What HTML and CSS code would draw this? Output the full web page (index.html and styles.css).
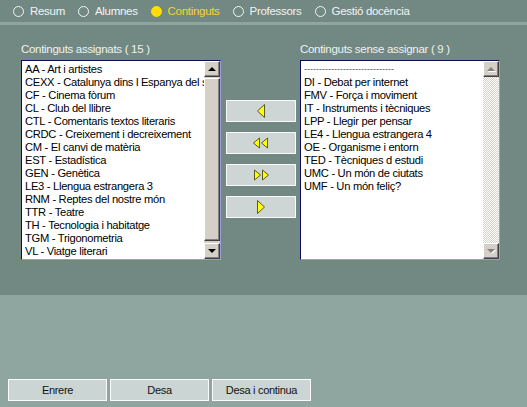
FILE: index.html
```html
<!DOCTYPE html>
<html>
<head>
<meta charset="utf-8">
<link rel="stylesheet" href="styles.css">
</head>
<body>
<div class="tabs">
  <div class="tab"><span class="radio"></span>Resum</div>
  <div class="tab"><span class="radio"></span>Alumnes</div>
  <div class="tab active"><span class="radio on"></span>Continguts</div>
  <div class="tab"><span class="radio"></span>Professors</div>
  <div class="tab"><span class="radio"></span>Gestió docència</div>
</div>
<div class="stripe"></div>
<div class="main">
  <div class="col">
    <div class="label">Continguts assignats ( 15 )</div>
    <div class="list">
      <div class="items">
        <div>AA - Art i artistes</div>
        <div>CEXX - Catalunya dins l Espanya del segle XX</div>
        <div>CF - Cinema fòrum</div>
        <div>CL - Club del llibre</div>
        <div>CTL - Comentaris textos literaris</div>
        <div>CRDC - Creixement i decreixement</div>
        <div>CM - El canvi de matèria</div>
        <div>EST - Estadística</div>
        <div>GEN - Genètica</div>
        <div>LE3 - Llengua estrangera 3</div>
        <div>RNM - Reptes del nostre món</div>
        <div>TTR - Teatre</div>
        <div>TH - Tecnologia i habitatge</div>
        <div>TGM - Trigonometria</div>
        <div>VL - Viatge literari</div>
      </div>
      <div class="sb">
        <div class="sbtn"><svg width="14" height="14" viewBox="0 0 14 14"><path d="M3 9 L7 5 L11 9 Z" fill="#000"/></svg></div>
        <div class="thumb"></div>
        <div class="sbtn"><svg width="14" height="14" viewBox="0 0 14 14"><path d="M3 5 L11 5 L7 9 Z" fill="#000"/></svg></div>
      </div>
    </div>
  </div>
  <div class="arrows">
    <div class="abtn"><svg width="14" height="16" viewBox="0 0 14 16"><path d="M10.5 1.5 L10.5 14.5 L3.5 8 Z" fill="#ffff00" stroke="#5a5a20" stroke-width="1"/></svg></div>
    <div class="abtn"><svg width="22" height="14" viewBox="0 0 22 14"><path d="M9.5 2 L9.5 12 L3.5 7 Z M17.5 2 L17.5 12 L11.5 7 Z" fill="#ffff00" stroke="#5a5a20" stroke-width="1"/></svg></div>
    <div class="abtn"><svg width="22" height="14" viewBox="0 0 22 14"><path d="M4.5 2 L4.5 12 L10.5 7 Z M12.5 2 L12.5 12 L18.5 7 Z" fill="#ffff00" stroke="#5a5a20" stroke-width="1"/></svg></div>
    <div class="abtn"><svg width="14" height="16" viewBox="0 0 14 16"><path d="M3.5 1.5 L3.5 14.5 L10.5 8 Z" fill="#ffff00" stroke="#5a5a20" stroke-width="1"/></svg></div>
  </div>
  <div class="col">
    <div class="label">Continguts sense assignar ( 9 )</div>
    <div class="list">
      <div class="items">
        <div class="dashes">------------------------------</div>
        <div>DI - Debat per internet</div>
        <div>FMV - Força i moviment</div>
        <div>IT - Instruments i tècniques</div>
        <div>LPP - Llegir per pensar</div>
        <div>LE4 - Llengua estrangera 4</div>
        <div>OE - Organisme i entorn</div>
        <div>TED - Tècniques d estudi</div>
        <div>UMC - Un món de ciutats</div>
        <div>UMF - Un món feliç?</div>
      </div>
      <div class="sb disabled">
        <div class="sbtn"><svg width="14" height="14" viewBox="0 0 14 14"><path d="M4 10 L8 6 L12 10 Z" fill="#fff"/><path d="M3 9 L7 5 L11 9 Z" fill="#808080"/></svg></div>
        <div class="track"></div>
        <div class="sbtn"><svg width="14" height="14" viewBox="0 0 14 14"><path d="M4 6 L12 6 L8 10 Z" fill="#fff"/><path d="M3 5 L11 5 L7 9 Z" fill="#808080"/></svg></div>
      </div>
    </div>
  </div>
</div>
<div class="footer">
  <div class="fbtn">Enrere</div>
  <div class="fbtn">Desa</div>
  <div class="fbtn">Desa i continua</div>
</div>
</body>
</html>
```
FILE: styles.css
```css
html, body {
  margin: 0;
  padding: 0;
}
body {
  width: 527px;
  height: 407px;
  overflow: hidden;
  background: #8fa59f;
  font-family: "Liberation Sans", Arial, sans-serif;
  font-size: 11px;
  letter-spacing: -0.3px;
}
.tabs {
  height: 22px;
  background: #728882;
  display: flex;
  align-items: center;
  padding-left: 13px;
  gap: 13px;
  color: #f2f4f4;
  font-size: 11.5px;
}
.tab {
  display: flex;
  align-items: center;
  gap: 6px;
  line-height: 14px;
}
.tab.active {
  color: #f5d630;
}
.radio {
  width: 9px;
  height: 9px;
  border: 1px solid #f5f5f5;
  border-radius: 50%;
  display: inline-block;
}
.radio.on {
  background: #ffdd00;
  border-color: #ffdd00;
}
.stripe {
  height: 3px;
  background: #8fa59f;
}
.main {
  height: 270px;
  background: #728882;
  display: flex;
  padding-left: 21px;
  box-sizing: border-box;
  padding-top: 17px;
}
.label {
  color: #eef2f1;
  line-height: 14px;
  height: 14px;
  margin-bottom: 4px;
  white-space: nowrap;
  font-size: 11.5px;
}
.list {
  width: 200px;
  height: 200px;
  box-sizing: border-box;
  background: #fff;
  border-top: 1px solid #0c0c5c;
  border-left: 1px solid #0c0c5c;
  border-right: 1px solid #9c9cd6;
  border-bottom: 1px solid #9c9cd6;
  display: flex;
}
.items {
  flex: 1;
  overflow: hidden;
  padding: 2px 0 0 3px;
  color: #000;
  font-size: 11.2px;
  line-height: 13px;
  white-space: nowrap;
}
.dashes {
  color: #555;
  font-size: 9px;
  letter-spacing: 0;
}
.sb {
  width: 16px;
  display: flex;
  flex-direction: column;
  background: #d4d0c8;
}
.sbtn {
  height: 16px;
  box-sizing: border-box;
  background: #d4d0c8;
  border-top: 1px solid #fff;
  border-left: 1px solid #fff;
  border-right: 1px solid #404040;
  border-bottom: 1px solid #404040;
  box-shadow: inset -1px -1px 0 #808080;
  display: flex;
  align-items: center;
  justify-content: center;
}
.thumb {
  flex: 1;
  margin: 1px 0 2px;
  box-sizing: border-box;
  background: #d4d0c8;
  border-top: 1px solid #fff;
  border-left: 1px solid #fff;
  border-right: 1px solid #404040;
  border-bottom: 1px solid #404040;
  box-shadow: inset -1px -1px 0 #808080;
}
.track {
  flex: 1;
  background-color: #ffffff;
  background-image:
    linear-gradient(45deg, #d4d0c8 25%, transparent 25%, transparent 75%, #d4d0c8 75%),
    linear-gradient(45deg, #d4d0c8 25%, transparent 25%, transparent 75%, #d4d0c8 75%);
  background-size: 2px 2px;
  background-position: 0 0, 1px 1px;
}
.arrows {
  display: flex;
  flex-direction: column;
  gap: 10px;
  margin: 58px 4px 0 5px;
}
.abtn {
  width: 70px;
  height: 22px;
  box-sizing: border-box;
  border: 1px solid #fafafa;
  background: #cdd6d4;
  display: flex;
  align-items: center;
  justify-content: center;
}
.footer {
  height: 112px;
  box-sizing: border-box;
  padding: 84px 0 0 8px;
  display: flex;
  gap: 3px;
}
.fbtn {
  width: 99px;
  height: 22px;
  box-sizing: border-box;
  border: 1px solid #fafafa;
  background: #cbd5d4;
  color: #111;
  display: flex;
  align-items: center;
  justify-content: center;
}
```
